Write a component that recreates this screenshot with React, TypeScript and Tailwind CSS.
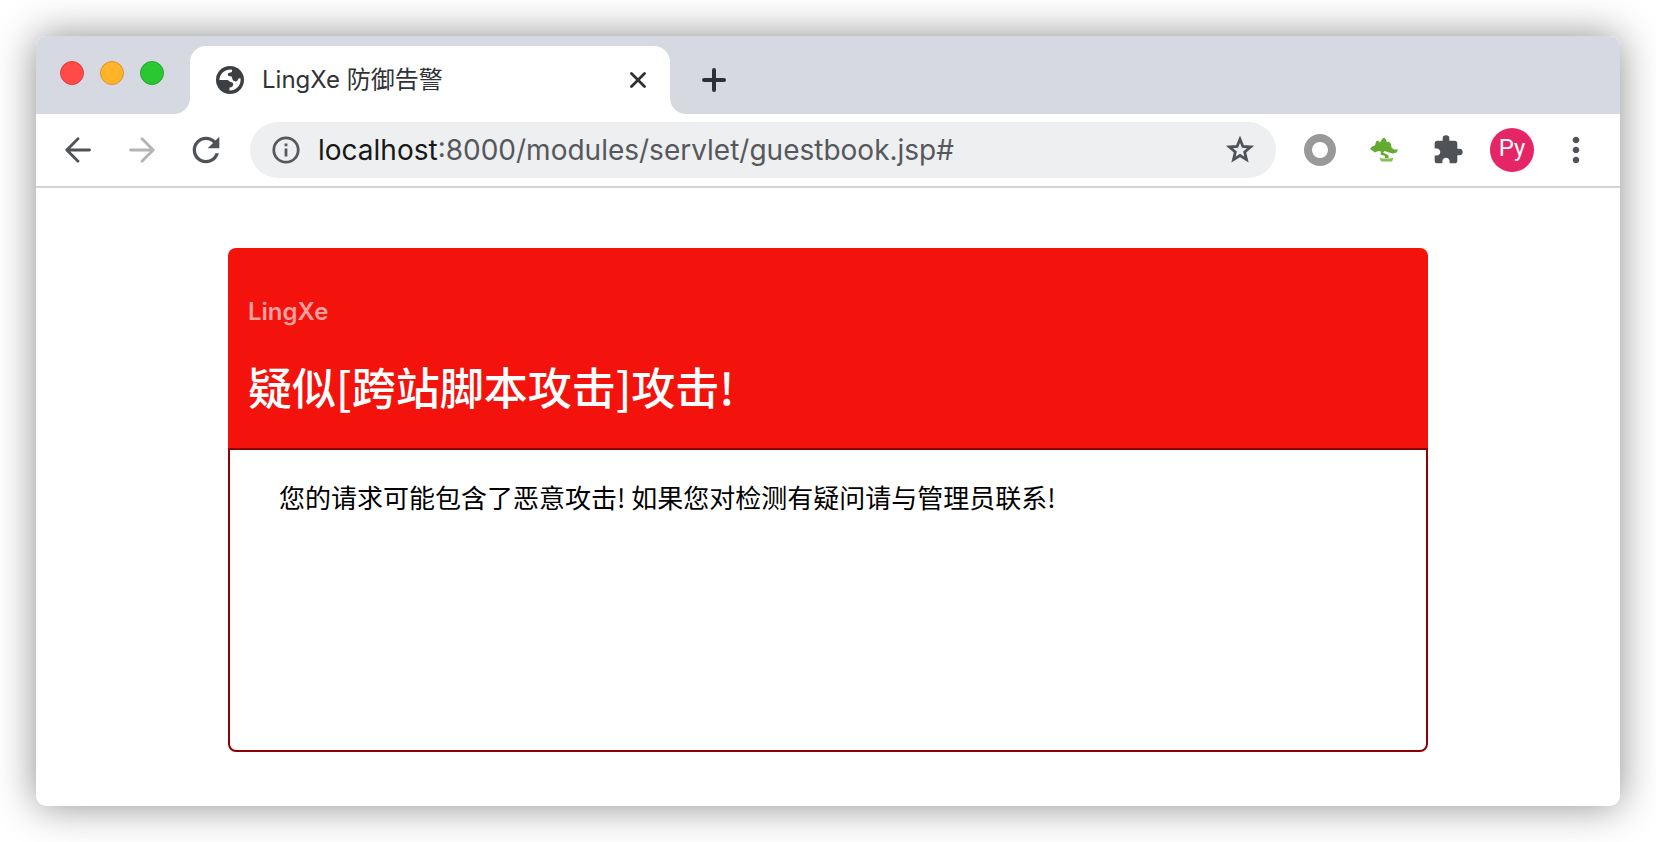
import React from 'react';
import { MdExtension, MdMoreVert, MdRefresh } from 'react-icons/md';

interface IconButtonProps {
  label: string;
  className?: string;
  children: React.ReactNode;
}

const IconButton: React.FC<IconButtonProps> = ({ label, className = '', children }) => (
  <button
    type="button"
    aria-label={label}
    className={`flex size-11 shrink-0 items-center justify-center text-[#4f5257] ${className}`}
  >
    {children}
  </button>
);

const GlobeIcon = () => (
  <svg viewBox="0 0 28 28" className="size-7 shrink-0" aria-hidden="true">
    <circle cx="14" cy="14" r="14" fill="#3c4043" />
    <path
      fill="#fff"
      d="M3.4 14C3.4 8 8.500 3.300 15.500 3.400C16.500 4.500 16.500 5.500 15 6.500L13 6.800C11.500 7.500 11.500 9 12.500 10L15.500 10.500C16.500 11.500 16 13.500 17.500 14.800C19.500 16 21.500 15.500 22 13.500C22.500 12.500 23.500 12 24.500 12.200C25.500 18.500 20.500 24.800 13.500 24.600V21.500C16 21.500 17.500 20 17.200 17.800C16.500 15.500 13.500 16.500 12 14Z"
    />
  </svg>
);

const ArrowIcon = ({ className = '' }: { className?: string }) => (
  <svg
    viewBox="0 0 26 26"
    className={`size-[26px] ${className}`}
    fill="none"
    stroke="currentColor"
    strokeWidth="2.8"
    strokeLinecap="round"
    strokeLinejoin="round"
    aria-hidden="true"
  >
    <path d="M24.500 13H2M13 1.800L1.800 13L13 24.200" />
  </svg>
);

const InfoIcon = () => (
  <svg viewBox="0 0 32 32" className="size-8 shrink-0 text-[#55585c]" fill="none" stroke="currentColor" strokeWidth="2.8" aria-hidden="true">
    <circle cx="16" cy="16" r="12.2" />
    <path d="M16 14.500V22.500M16 9.500V12.300" />
  </svg>
);

const StarIcon = () => (
  <svg viewBox="0 0 30 30" className="size-[30px]" fill="none" stroke="currentColor" strokeWidth="2.8" aria-hidden="true">
    <path d="M15 4.200L17.900 11.400L25.600 12L19.700 17L21.500 24.600L15 20.500L8.500 24.600L10.300 17L4.400 12L12.100 11.400Z" />
  </svg>
);

const BonsaiIcon = () => (
  <svg viewBox="0 0 28 26" className="h-[26px] w-7" aria-hidden="true">
    <path
      fill="#62ab30"
      d="M0 12L2 9.500L5 8.500L6 4.500L8 3.500L10 5.500L12 2L14 0.500L16 2.500L17 5.500L19 4.500L21 7L21.500 10.500L24 12.500L28 12.500L26.500 15.500L23 16.500L19 15.500L14.500 14L13 15.500L16 17L18.500 18.500V21H15V19L10.500 17.500L11 14.500L8 14L5 15.500Z"
    />
    <path fill="#7fc24f" d="M9.500 20.500L12 21.500H20.500L23.500 20.500L22 24.500H11Z" />
  </svg>
);

const TrafficLights = () => (
  <div className="flex gap-4 pt-[25px] pl-6">
    <button type="button" aria-label="Close window" className="size-6 rounded-full border border-[#df3d3e] bg-[#ff4a48]" />
    <button type="button" aria-label="Minimize window" className="size-6 rounded-full border border-[#d9952b] bg-[#ffb428]" />
    <button type="button" aria-label="Zoom window" className="size-6 rounded-full border border-[#24a52b] bg-[#29c732]" />
  </div>
);

const TabStrip = () => (
  <div className="flex h-[78px] bg-white">
    <div className="w-[154px] shrink-0 rounded-br-2xl bg-[#d6d9e1]">
      <TrafficLights />
    </div>
    <div className="w-[480px] shrink-0 bg-[#d6d9e1] pt-2.5">
      <div className="flex h-full items-center rounded-t-2xl bg-white pr-5 pl-[26px]">
        <GlobeIcon />
        <span className="ml-[18px] flex-1 font-['Inter','Noto_Sans_CJK_SC',sans-serif] text-2xl text-[#303236]">
          LingXe 防御告警
        </span>
        <button type="button" aria-label="Close tab" className="flex size-6 items-center justify-center text-[#2d3135]">
          <svg viewBox="0 0 16 16" className="size-4" fill="none" stroke="currentColor" strokeWidth="2.8" strokeLinecap="round" aria-hidden="true">
            <path d="M1.500 1.500L14.500 14.500M14.500 1.500L1.500 14.500" />
          </svg>
        </button>
      </div>
    </div>
    <div className="flex flex-1 items-center rounded-bl-2xl bg-[#d6d9e1] pt-2.5 pl-8">
      <button type="button" aria-label="New tab" className="text-[#2d3135]">
        <svg viewBox="0 0 24 24" className="size-6" fill="none" stroke="currentColor" strokeWidth="4" strokeLinecap="round" aria-hidden="true">
          <path d="M12 2V22M2 12H22" />
        </svg>
      </button>
    </div>
  </div>
);

const AddressBar = () => (
  <div className="ml-[22px] flex h-14 min-w-0 flex-1 items-center rounded-full bg-[#eeeff1] pr-3.5 pl-5">
    <InfoIcon />
    <label
      htmlFor="address"
      className="ml-4 font-['Inter',sans-serif] text-[28px] text-[#17181a]"
    >
      localhost
    </label>
    <input
      id="address"
      type="text"
      defaultValue=":8000/modules/servlet/guestbook.jsp#"
      className="h-full min-w-0 flex-1 bg-transparent font-['Inter',sans-serif] text-[28px] text-[#56585b] outline-none"
    />
    <IconButton label="Bookmark this page">
      <StarIcon />
    </IconButton>
  </div>
);

const Toolbar = () => (
  <div className="flex h-[74px] items-center border-b-2 border-[#d2d4d9] pr-[22px] pl-5">
    <IconButton label="Back">
      <ArrowIcon />
    </IconButton>
    <IconButton label="Forward" className="ml-5">
      <ArrowIcon className="rotate-180 text-[#b3b4b6]" />
    </IconButton>
    <IconButton label="Reload" className="ml-5">
      <MdRefresh className="size-10" />
    </IconButton>
    <AddressBar />
    <div className="ml-[22px] flex gap-5">
      <IconButton label="Recorder extension">
        <span className="size-8 rounded-full border-8 border-[#999]" />
      </IconButton>
      <IconButton label="Bonsai extension">
        <BonsaiIcon />
      </IconButton>
      <IconButton label="Extensions">
        <MdExtension className="size-8" />
      </IconButton>
      <IconButton label="Profile" className="rounded-full bg-[#e52565] pb-1">
        <span className="font-['Roboto',sans-serif] text-2xl leading-6 text-white">Py</span>
      </IconButton>
      <IconButton label="Menu">
        <MdMoreVert className="size-10" />
      </IconButton>
    </div>
  </div>
);

const AlertCard = () => (
  <section className="mx-auto max-w-[1200px] font-['Noto_Sans_CJK_SC',sans-serif]">
    <header className="rounded-t-lg bg-[#f4120d] px-5 pt-12 pb-[30px]">
      <p className="font-['Inter',sans-serif] text-2xl leading-8 font-semibold text-[#ffa09e]">LingXe</p>
      <h1 className="mt-[26px] text-[44px] leading-[64px] font-medium text-white">疑似[跨站脚本攻击]攻击!</h1>
    </header>
    <div className="min-h-[304px] rounded-b-lg border-2 border-[#8f0005] px-[49px] pt-[27px] pb-7">
      <p className="text-[26px] leading-10 text-black">
        您的请求可能包含了恶意攻击! 如果您对检测有疑问请与管理员联系!
      </p>
    </div>
  </section>
);

export default function App() {
  return (
    <div className="bg-white p-9">
      <div className="overflow-hidden rounded-[10px] bg-white shadow-[0_0_40px_rgba(0,0,0,0.45)]">
        <TabStrip />
        <Toolbar />
        <main className="px-10 pt-[60px] pb-[54px]">
          <AlertCard />
        </main>
      </div>
    </div>
  );
}
